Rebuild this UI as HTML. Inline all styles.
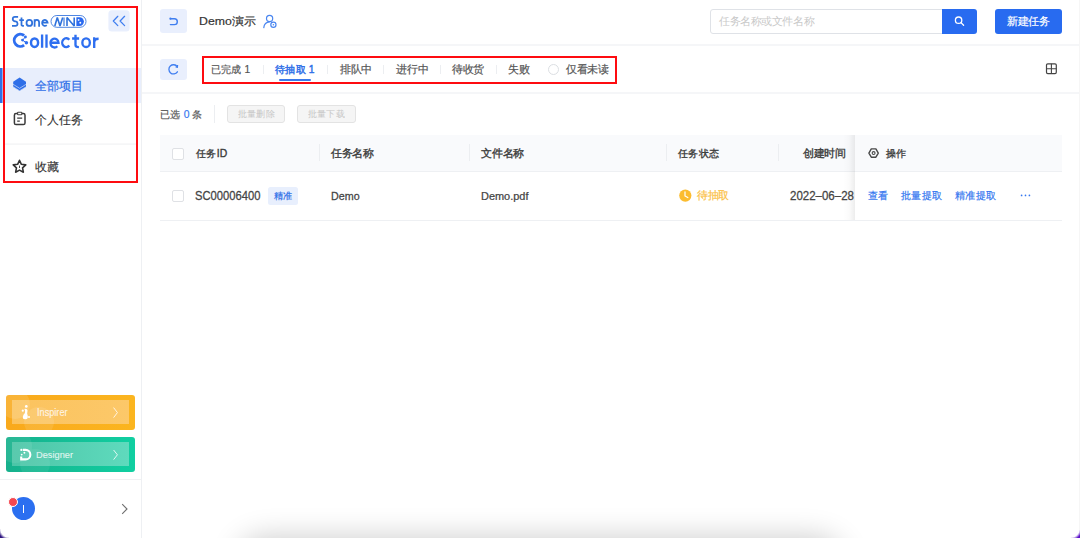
<!DOCTYPE html>
<html><head><meta charset="utf-8">
<style>
*{margin:0;padding:0;box-sizing:border-box}
html,body{width:1080px;height:538px;overflow:hidden;background:#fff;font-family:"Liberation Sans",sans-serif;color:#333}
.abs{position:absolute}
#side{position:absolute;left:0;top:0;width:142px;height:538px;background:#fff;border-right:1px solid #eef0f3}
.redbox{position:absolute;border:2px solid #fe0c10}
.txt{position:absolute;white-space:nowrap;line-height:1;-webkit-text-stroke:0.2px;transform-origin:0 0}
.hline{position:absolute;height:1px;background:#eff1f4}
.vline{position:absolute;width:1px;background:#eceef1}
.btnl{position:absolute;background:#e9effd;border-radius:3px}
</style></head>
<body>
<!-- sidebar -->
<div id="side"></div>

<!-- logo -->
<svg class="abs" style="left:0;top:0" width="142" height="200" viewBox="0 0 142 200">
 <g fill="none" stroke="#2f72dc" stroke-width="1.75">
  <path d="M18.1 16.95 H14.9 Q12.75 16.95 12.75 19 Q12.75 20.9 14.9 21.3 L15.7 21.45 Q17.55 21.8 17.55 23.8 Q17.55 25.95 15.4 25.95 H12"/>
  <path d="M21.5 17.6 V24.7 Q21.5 25.95 23.9 25.95 M19.3 20.1 H23.9"/>
  <ellipse cx="29.35" cy="22.9" rx="2.85" ry="3"/>
  <path d="M34.6 19.2 V26.7 M34.6 22.6 Q34.6 19.95 36.85 19.95 Q39.1 19.95 39.1 22.6 V26.7"/>
  <path d="M42.2 22.55 H47.6 A2.75 2.95 0 1 0 46.7 25.1"/>
 </g>
 <rect x="51" y="15.5" width="35" height="11.8" rx="5.9" fill="none" stroke="#4f86e2" stroke-width="1"/>
 <g fill="none" stroke="#2f72dc" stroke-width="1.6" stroke-linejoin="bevel">
  <path d="M54.8 25.9 L57.3 17.4 L60 25.9 L62.7 17.4"/>
  <path d="M64 17.4 V25.9" stroke="#5b8ee0" stroke-width="1.4"/>
  <path d="M67 25.9 V17.4 L74.2 25.9 V17.4"/>
 </g>
 <path d="M76.4 17.2 H79.6 A4.3 4.4 0 0 1 79.6 26 H76.4 Z" fill="#2a6af0"/>
 <circle cx="78.6" cy="19.9" r="0.9" fill="#fff"/><circle cx="80.3" cy="22.8" r="0.95" fill="#fff"/>
 <g fill="none" stroke="#2e6ff0" stroke-width="2.35">
  <path d="M24.1 35.5 A6.1 6.1 0 1 0 24.1 45.1" stroke-width="2.9"/>
  <ellipse cx="34.55" cy="42.65" rx="3.55" ry="4.25" stroke-width="2.45"/>
  <path d="M42.1 34.6 V47.8 M46.5 34.6 V47.8"/>
  <path d="M50.4 42.75 H58.5 A4.05 4.45 0 1 0 57.3 46.2"/>
  <path d="M69.3 39.7 A4.05 4.45 0 1 0 69.3 45.6"/>
  <path d="M75.5 34.8 V45 Q75.5 47.1 78.9 47.1 M72.1 38.5 H79.1"/>
  <ellipse cx="86.1" cy="42.65" rx="3.75" ry="4.35"/>
  <path d="M94.2 37.3 V48 M94.2 42.3 Q94.3 38.7 98.6 38.7"/>
 </g>
 <circle cx="25.4" cy="37" r="1.45" fill="#2e6ff0"/><circle cx="22.5" cy="40.1" r="1.45" fill="#2e6ff0"/><circle cx="26.4" cy="42.8" r="1.75" fill="#2e6ff0"/>
 <path d="M25.4 37 L22.5 40.1 L26.4 42.8" fill="none" stroke="#2e6ff0" stroke-width="1"/>
 <!-- collapse -->
 <rect x="108.4" y="10.3" width="21.2" height="21.2" rx="3.5" fill="#e9effd"/>
 <path d="M117.8 16.3 L113.3 21 L117.8 25.6 M124.6 16.3 L120.1 21 L124.6 25.6" fill="none" stroke="#3f7ef0" stroke-width="1.25" stroke-linecap="round" stroke-linejoin="round"/>
 <!-- nav active -->
 <rect x="0" y="68" width="141" height="35" fill="#e8eefc"/>
 <rect x="0" y="68" width="2.5" height="35" fill="#2f6fe8"/>
 <path d="M13.2 81.8 L19.6 77.6 L26 81.8 L26 86.9 L19.6 90.9 L13.2 86.9 Z" fill="#2f6fe8"/>
 <path d="M12.8 84.1 L19.6 88.3 L26.4 84.1 M12.8 86.6 L19.6 90.8 L26.4 86.6" fill="none" stroke="#e8eefc" stroke-width="0.8" stroke-opacity="0.75"/>
 <!-- clipboard -->
 <rect x="14.4" y="113.6" width="10.6" height="10.9" rx="1.6" fill="none" stroke="#3a3a3a" stroke-width="1.5"/>
 <rect x="17.6" y="112.2" width="4.2" height="2.6" rx="0.6" fill="#fff" stroke="#444" stroke-width="1.1"/>
 <path d="M17.2 118.2 H22.2 M17.2 121.2 H19.8" stroke="#3a3a3a" stroke-width="1.3"/>
 <!-- star -->
 <path d="M19.50 160.30 L21.38 164.31 L25.78 164.86 L22.54 167.89 L23.38 172.24 L19.50 170.10 L15.62 172.24 L16.46 167.89 L13.22 164.86 L17.62 164.31Z" fill="none" stroke="#333" stroke-width="1.55" stroke-linejoin="round"/>
 <path d="M19.5 165.6 V168" stroke="#333" stroke-width="0.9"/>
 <rect x="4" y="143.5" width="133" height="1.2" fill="#f1f2f4"/>
</svg>

<div class="redbox" style="left:3px;top:6px;width:135px;height:177px"></div>

<!-- bottom promos -->
<div class="abs" style="left:6px;top:394.6px;width:128.6px;height:35.2px;background:linear-gradient(90deg,#f9a91c,#fbb51f);border-radius:3px;overflow:hidden">
  <div class="abs" style="left:6px;top:5.5px;width:117px;height:24px;background:linear-gradient(90deg,#fbc35e,#fcc869)"></div>
  <div class="abs" style="left:-6px;top:-6px;width:30px;height:30px;border-radius:50%;background:rgba(255,255,255,0.12)"></div>
  <div class="abs" style="left:18px;top:12px;width:30px;height:30px;border-radius:50%;background:rgba(255,255,255,0.10)"></div>
</div>

<div class="abs" style="left:6px;top:436.6px;width:128.6px;height:35.7px;background:linear-gradient(90deg,#17b08c,#10cfa1);border-radius:3px;overflow:hidden">
  <div class="abs" style="left:6px;top:5.5px;width:117px;height:23.5px;background:linear-gradient(90deg,#4cc5a7,#5fdabd)"></div>
  <div class="abs" style="left:-8px;top:-8px;width:34px;height:34px;border-radius:50%;background:rgba(255,255,255,0.08)"></div>
  <div class="abs" style="left:14px;top:12px;width:30px;height:30px;border-radius:50%;background:rgba(255,255,255,0.07)"></div>
</div>
<svg class="abs" style="left:0;top:390px" width="142" height="90" viewBox="0 390 142 90">
 <circle cx="26.3" cy="406.4" r="1.35" fill="#fff"/><circle cx="22.8" cy="410.7" r="1.1" fill="#fff"/><circle cx="29" cy="416.9" r="1" fill="#fff"/>
 <path d="M24.4 408.9 Q28.2 408.6 27.4 411.8 Q26.8 413.8 27.7 415.4 Q28.5 418.8 25.5 419.3 Q22.5 419.5 22.8 416.8 Q23.2 414.6 24.9 413 Q25.9 411.8 24.4 408.9 Z" fill="#fff"/>
 <path d="M113.6 407.6 L117.4 412.6 L113.6 417.6" fill="none" stroke="#fff" stroke-opacity="0.8" stroke-width="1"/>
 <path d="M113.6 450 L117.4 454.8 L113.6 459.6" fill="none" stroke="#fff" stroke-opacity="0.8" stroke-width="1"/>
 <path d="M23 449.9 H25.6 A4.75 4.75 0 0 1 25.6 459.4 H21.2 V456.6" fill="none" stroke="#fff" stroke-width="2.1"/>
 <circle cx="21.4" cy="449.9" r="1.15" fill="#fff"/><circle cx="24.4" cy="452.7" r="0.95" fill="#fff"/><circle cx="21.7" cy="454.6" r="0.95" fill="#fff"/>
</svg>
<div class="hline" style="left:0;top:479px;width:141px;background:#f0f1f3"></div>
<div class="abs" style="left:12px;top:497px;width:23px;height:23px;border-radius:50%;background:#2b6ff0"></div>
<div class="abs" style="left:23px;top:505px;width:1.3px;height:8px;background:#fff"></div>
<div class="abs" style="left:8px;top:496.5px;width:10px;height:10px;border-radius:50%;background:#f5474f;border:1px solid #fff"></div>
<svg class="abs" style="left:118px;top:500px" width="14" height="18"><path d="M4.2 4.2 L9 9 L4.2 13.8" fill="none" stroke="#707070" stroke-width="1.1"/></svg>

<!-- header -->
<div class="btnl" style="left:160px;top:9px;width:27px;height:24px"></div>
<div class="hline" style="left:142px;top:44px;width:938px;height:2px;background:#f5f6f8"></div>

<div class="abs" style="left:710px;top:9px;width:233px;height:25px;border:1px solid #dfe2e7;border-radius:3px 0 0 3px"></div>
<div class="abs" style="left:942px;top:9px;width:35px;height:25px;background:#286bf0;border-radius:0 3px 3px 0"></div>
<div class="abs" style="left:995px;top:9px;width:67px;height:25px;background:#286bf0;border-radius:3px"></div>

<!-- toolbar -->
<div class="btnl" style="left:160px;top:59px;width:27px;height:21px"></div>
<div class="hline" style="left:142px;top:92px;width:938px;height:2px;background:#f5f6f8"></div>
<div class="redbox" style="left:202px;top:55.8px;width:415px;height:28.7px"></div>


<!-- tabs -->
<div class="vline" style="left:263px;top:65px;height:9px"></div>
<div class="abs" style="left:279px;top:79px;width:32px;height:2px;background:#3a78ea;border-radius:1px"></div>
<div class="vline" style="left:327px;top:65px;height:9px"></div>
<div class="vline" style="left:383px;top:65px;height:9px"></div>
<div class="vline" style="left:440px;top:65px;height:9px"></div>
<div class="vline" style="left:496px;top:65px;height:9px"></div>
<div class="abs" style="left:547.8px;top:63.7px;width:11.5px;height:11.5px;border:1px solid #dcdfe3;border-radius:50%"></div>

<!-- selection bar -->
<div class="vline" style="left:214px;top:105px;height:18px;background:#eceef1"></div>
<div class="abs" style="left:227px;top:105px;width:58px;height:18px;background:#f5f5f5;border:1px solid #e3e3e3;border-radius:3px"></div>
<div class="abs" style="left:297px;top:105px;width:59px;height:18px;background:#f5f5f5;border:1px solid #e3e3e3;border-radius:3px"></div>

<!-- table header -->
<div class="abs" style="left:160px;top:135px;width:902px;height:36px;background:#f9fafc"></div>
<div class="abs" style="left:171.6px;top:148.2px;width:12.2px;height:12.2px;border:1px solid #dfe1e5;border-radius:2px;background:#fff"></div>
<div class="vline" style="left:319px;top:144px;height:17px"></div>
<div class="vline" style="left:469px;top:144px;height:17px"></div>
<div class="vline" style="left:666px;top:144px;height:17px"></div>
<div class="vline" style="left:778px;top:144px;height:17px"></div>
<div class="hline" style="left:160px;top:171px;width:902px;background:#eef0f3"></div>

<!-- row -->
<div class="abs" style="left:171.6px;top:189.6px;width:12.2px;height:12.2px;border:1px solid #dfe1e5;border-radius:2px;background:#fff"></div>
<div class="abs" style="left:268px;top:187px;width:30px;height:17.6px;background:#e8effd;border-radius:2.5px"></div>


<div class="hline" style="left:160px;top:220px;width:902px;background:#eef0f3"></div>
<div class="abs" style="left:843px;top:135px;width:12px;height:85px;background:linear-gradient(90deg,rgba(0,0,0,0),rgba(0,0,0,0.015) 50%,rgba(0,0,0,0.07))"></div>

<svg class="abs" style="left:0;top:0" width="1080" height="240" viewBox="0 0 1080 240">
 <!-- back icon -->
 <path d="M170.6 18.8 H174.4 A2.9 2.9 0 0 1 174.4 24.6 H170.4" fill="none" stroke="#3f7ef0" stroke-width="1.4" stroke-linecap="round"/>
 <circle cx="170.4" cy="18.7" r="1.1" fill="#3f7ef0"/>
 <!-- person icon -->
 <circle cx="269.6" cy="18.4" r="3.1" fill="none" stroke="#4a86f0" stroke-width="1.2"/>
 <path d="M263.8 27.6 Q264.2 22 269.8 21.8" fill="none" stroke="#4a86f0" stroke-width="1.2" stroke-linecap="round"/>
 <circle cx="273.4" cy="24.8" r="2.6" fill="#fff" stroke="#4a86f0" stroke-width="1.2"/>
 <circle cx="273.4" cy="24.8" r="0.8" fill="#4a86f0"/>
 <!-- refresh -->
 <path d="M177.2 66.6 A4.6 4.6 0 1 0 177.4 71.8" fill="none" stroke="#3f7ef0" stroke-width="1.3" stroke-linecap="round"/>
 <path d="M177.6 65 L177.4 67.2 L175.6 66.8" fill="none" stroke="#3f7ef0" stroke-width="1.2"/>
 <!-- search -->
 <circle cx="958.6" cy="20.2" r="3.2" fill="none" stroke="#fff" stroke-width="1.3"/>
 <path d="M961 22.6 L963.6 25.2" stroke="#fff" stroke-width="1.3" stroke-linecap="round"/>
 <!-- grid -->
 <rect x="1046.5" y="63.8" width="9.8" height="9.8" rx="1.3" fill="none" stroke="#444" stroke-width="1.2"/>
 <path d="M1051.4 63.8 V73.6 M1046.5 68.7 H1056.3" stroke="#444" stroke-width="1.1"/>
 <!-- settings -->
 <path d="M871.3 148.9 H875.9 L878.3 153.05 L875.9 157.2 H871.3 L868.9 153.05 Z" fill="none" stroke="#484848" stroke-width="1.4" stroke-linejoin="round"/>
 <circle cx="873.6" cy="153.05" r="1.45" fill="none" stroke="#484848" stroke-width="1.1"/>
 <!-- clock -->
 <circle cx="685.3" cy="195.6" r="6.1" fill="#fbbc2f"/>
 <path d="M685 191.8 V196 L687.8 197.6" fill="none" stroke="#fff" stroke-width="1.2" stroke-linecap="round"/>
 <!-- ellipsis -->
 <circle cx="1021.6" cy="195.4" r="0.85" fill="#3577f0"/><circle cx="1025.5" cy="195.4" r="0.85" fill="#3577f0"/><circle cx="1029.4" cy="195.4" r="0.85" fill="#3577f0"/>
</svg>
<div class="abs" style="left:245px;top:545px;width:590px;height:40px;border-radius:20px;box-shadow:0 0 30px 8px rgba(0,0,0,0.2)"></div>
<div class="abs" style="left:0;top:529px;width:9px;height:9px;background:radial-gradient(circle at 9px 0px,rgba(46,20,128,0) 8.3px,#2e1480 11px)"></div>
<div class="abs" style="left:1071px;top:529px;width:9px;height:9px;background:radial-gradient(circle at 0px 0px,rgba(90,15,200,0) 8.3px,#5a0fc8 11px)"></div>
<div class="abs" style="left:1079px;top:0;width:1px;height:530px;background:#f6f6f6"></div>
<div class="txt" id="nav1" style="left:34.70px;top:79.63px;font-size:12px;color:#2f6fe8;transform:scale(1.0110,1.0110);-webkit-text-stroke:0.22px">全部项目</div>
<div class="txt" id="nav2" style="left:34.56px;top:113.55px;font-size:12px;color:#333;transform:scale(1.0124,1.0124);-webkit-text-stroke:0.12px">个人任务</div>
<div class="txt" id="nav3" style="left:34.72px;top:160.74px;font-size:12px;color:#333;transform:scale(1.0198,1.0198);-webkit-text-stroke:0.12px">收藏</div>
<div class="txt" id="insp" style="left:36.59px;top:407.74px;font-size:9px;color:rgba(255,255,255,0.78);transform:scale(1.0170,1.1284);-webkit-text-stroke:0.15px">Inspirer</div>
<div class="txt" id="desg" style="left:35.61px;top:450.54px;font-size:9px;color:rgba(255,255,255,0.78);transform:scale(1.0291,0.9472);-webkit-text-stroke:0.15px">Designer</div>
<div class="txt" id="title" style="left:198.55px;top:15.65px;font-size:12px;color:#333;transform:scale(1.0243,0.9376);">Demo演示</div>
<div class="txt" id="ph" style="left:718.57px;top:15.66px;font-size:11px;color:#c9c9c9;transform:scale(0.9612,0.9612);-webkit-text-stroke:0">任务名称或文件名称</div>
<div class="txt" id="newb" style="left:1006.74px;top:15.55px;font-size:11px;color:#fff;transform:scale(0.9557,0.9557);">新建任务</div>
<div class="txt" id="tab1" style="left:210.62px;top:64.50px;font-size:11px;color:#555;transform:scale(0.9301,0.9301);">已完成 1</div>
<div class="txt" id="tab2" style="left:274.59px;top:64.71px;font-size:11px;color:#2f6fe8;transform:scale(0.9348,0.9348);-webkit-text-stroke:0.45px">待抽取 1</div>
<div class="txt" id="tab3" style="left:339.50px;top:63.60px;font-size:11px;color:#555;transform:scale(0.9760,0.9760);">排队中</div>
<div class="txt" id="tab4" style="left:395.70px;top:63.58px;font-size:11px;color:#555;transform:scale(0.9816,0.9816);">进行中</div>
<div class="txt" id="tab5" style="left:451.53px;top:63.71px;font-size:11px;color:#555;transform:scale(0.9593,0.9593);">待收货</div>
<div class="txt" id="tab6" style="left:507.75px;top:63.67px;font-size:11px;color:#555;transform:scale(0.9904,0.9904);">失败</div>
<div class="txt" id="tab7" style="left:565.60px;top:63.65px;font-size:11px;color:#555;transform:scale(0.9700,0.9700);">仅看未读</div>
<div class="txt" id="sel" style="left:159.54px;top:108.69px;font-size:11px;color:#555;transform:scale(0.9445,0.9445);">已选 <span style="color:#3577f0">0</span> 条</div>
<div class="txt" id="bdel" style="left:237.65px;top:109.61px;font-size:9px;color:#c6c6c6;transform:scale(1.0262,1.0262);-webkit-text-stroke:0">批量删除</div>
<div class="txt" id="bdl" style="left:307.60px;top:109.70px;font-size:9px;color:#c6c6c6;transform:scale(1.0220,1.0220);-webkit-text-stroke:0">批量下载</div>
<div class="txt" id="h1" style="left:195.67px;top:148.67px;font-size:11px;color:#3a3a3a;transform:scale(0.9444,0.9444);-webkit-text-stroke:0.35px">任务ID</div>
<div class="txt" id="h2" style="left:330.70px;top:147.64px;font-size:11px;color:#3a3a3a;transform:scale(0.9573,0.9573);-webkit-text-stroke:0.35px">任务名称</div>
<div class="txt" id="h3" style="left:480.69px;top:147.50px;font-size:11px;color:#3a3a3a;transform:scale(0.9842,0.9842);-webkit-text-stroke:0.35px">文件名称</div>
<div class="txt" id="h4" style="left:677.72px;top:147.67px;font-size:11px;color:#3a3a3a;transform:scale(0.9521,0.9521);-webkit-text-stroke:0.35px">任务状态</div>
<div class="txt" id="h5" style="left:802.56px;top:147.56px;font-size:11px;color:#3a3a3a;transform:scale(0.9628,0.9628);-webkit-text-stroke:0.35px">创建时间</div>
<div class="txt" id="h6" style="left:885.61px;top:148.65px;font-size:11px;color:#3a3a3a;transform:scale(0.8738,0.8738);-webkit-text-stroke:0.35px">操作</div>
<div class="txt" id="r1" style="left:194.69px;top:189.66px;font-size:11px;color:#444;transform:scale(1.0184,1.1043);-webkit-text-stroke:0.25px">SC00006400</div>
<div class="txt" id="tag" style="left:273.68px;top:191.54px;font-size:9px;color:#2f6fe8;transform:scale(1.0080,1.0080);">精准</div>
<div class="txt" id="r2" style="left:330.55px;top:190.64px;font-size:11px;color:#444;transform:scale(0.9753,1.0511);-webkit-text-stroke:0.25px">Demo</div>
<div class="txt" id="r3" style="left:480.60px;top:190.61px;font-size:11px;color:#444;transform:scale(0.9954,0.9730);-webkit-text-stroke:0.25px">Demo.pdf</div>
<div class="txt" id="st" style="left:696.61px;top:189.61px;font-size:11px;color:#fbbf45;transform:scale(0.9611,0.9611);">待抽取</div>
<div class="txt" id="date" style="left:789.74px;top:189.72px;font-size:11px;color:#444;transform:scale(1.0453,1.0793);-webkit-text-stroke:0.25px">2022–06–28</div>
<div class="txt" id="a1" style="left:867.59px;top:189.63px;font-size:11px;color:#3577f0;transform:scale(0.9480,0.9480);">查看</div>
<div class="txt" id="a2" style="left:900.64px;top:190.67px;font-size:11px;color:#3577f0;transform:scale(0.9420,0.9420);">批量提取</div>
<div class="txt" id="a3" style="left:954.51px;top:189.63px;font-size:11px;color:#3577f0;transform:scale(0.9532,0.9532);">精准提取</div>
</body></html>
